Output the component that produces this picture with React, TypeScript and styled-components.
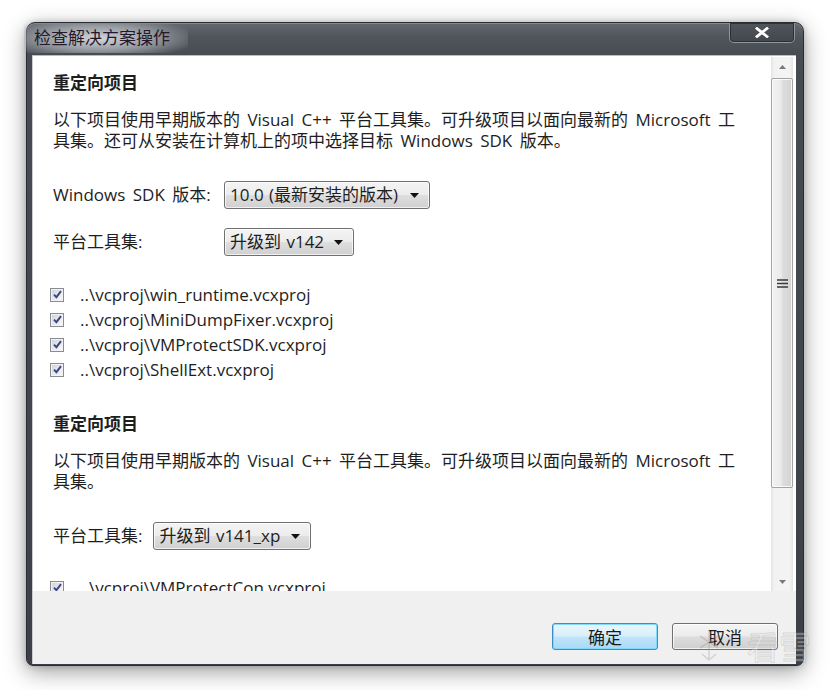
import React from 'react';
import styled, { createGlobalStyle } from 'styled-components';

const Global = createGlobalStyle`
  html, body { margin: 0; padding: 0; background: #ffffff; }
  body { font-family: "Open Sans", "Noto Sans CJK SC", sans-serif; color: #1e1e1e; }
`;

const Stage = styled.div`
  position: relative;
  width: 832px;
  height: 690px;
  box-sizing: border-box;
  padding: 22px 0 0 26px;
  overflow: hidden;
  background: #ffffff;
`;

const Window = styled.div`
  width: 778px;
  height: 644px;
  box-sizing: border-box;
  display: flex;
  flex-direction: column;
  padding: 0 7px 1px 5px;
  border: 1px solid #2a2d32;
  border-radius: 9px 9px 7px 7px;
  background: linear-gradient(180deg, #646970 0px, #50555c 14px, #474c53 32px, #3c4046 100%);
  box-shadow: 0 6px 22px rgba(0, 0, 0, 0.38), 0 0 6px rgba(0, 0, 0, 0.2),
    inset 0 1px 0 rgba(255, 255, 255, 0.22);
`;

const TitleBar = styled.div`
  height: 32px;
  display: flex;
  justify-content: space-between;
  align-items: flex-start;
`;

const Title = styled.div`
  margin: 1px 0 0 -8px;
  padding: 2px 18px 5px 10px;
  font-family: "Noto Sans CJK SC", sans-serif;
  font-size: 17px;
  line-height: 22px;
  color: #24182c;
  background: radial-gradient(ellipse 62% 75% at 45% 50%, rgba(218, 221, 226, 0.95) 0%, rgba(172, 177, 184, 0.7) 58%, rgba(120, 125, 132, 0) 100%);
`;

const CloseButton = styled.div`
  width: 66px;
  height: 20px;
  margin-right: 1px;
  box-sizing: border-box;
  display: flex;
  align-items: center;
  justify-content: center;
  border: 1px solid rgba(190, 196, 206, 0.6);
  border-top: none;
  border-radius: 0 0 5px 5px;
  background: linear-gradient(180deg, #50555c 0%, #43474e 100%);
  box-shadow: inset 0 0 0 1px rgba(20, 22, 26, 0.55);
`;

const Client = styled.div`
  flex: 1;
  display: flex;
  flex-direction: column;
  background: #f0f0f0;
  border-top: 1px solid #b9bcc0;
  border-left: 1px solid #c9ccd0;
`;

const ScrollArea = styled.div`
  height: 535px;
  display: flex;
  background: #ffffff;
`;

const Content = styled.div`
  flex: 1;
  overflow: hidden;
  padding: 15px 0 0 20px;
  font-size: 17px;
  word-spacing: 3px;
  color: #1e1e1e;
`;

const Heading = styled.div<{ $top?: number }>`
  margin-top: ${(p) => p.$top ?? 0}px;
  font-family: "Noto Sans CJK SC", sans-serif;
  font-weight: 700;
  font-size: 17px;
  line-height: 22px;
`;

const Para = styled.p`
  margin: 16px 0 0;
  width: 692px;
  line-height: 21px;
`;

const FormGrid = styled.div`
  margin-top: 30px;
  display: grid;
  grid-template-columns: 171px auto;
  row-gap: 19px;
  align-items: center;
  justify-items: start;
`;

const FormRow = styled.div`
  margin-top: 30px;
  display: flex;
  align-items: center;
  gap: 11px;
`;

const Label = styled.span`
  line-height: 22px;
`;

const Select = styled.div<{ $w: number }>`
  width: ${(p) => p.$w}px;
  height: 28px;
  box-sizing: border-box;
  display: flex;
  align-items: center;
  justify-content: space-between;
  padding: 0 10px 0 5px;
  border: 1px solid #707070;
  border-radius: 3px;
  background: linear-gradient(180deg, #f4f4f4 0%, #ececec 48%, #dedede 52%, #d0d0d0 100%);
  box-shadow: inset 0 0 0 1px rgba(255, 255, 255, 0.7);
  line-height: 22px;
  word-spacing: 1px;
  white-space: nowrap;
`;

const CheckList = styled.div<{ $top: number }>`
  margin: ${(p) => p.$top}px 0 0 -3px;
  display: flex;
  flex-direction: column;
`;

const CheckRow = styled.div`
  height: 25px;
  display: flex;
  align-items: center;
  gap: 16px;
  line-height: 22px;
  white-space: nowrap;
`;

const Box = styled.span`
  width: 14px;
  height: 14px;
  box-sizing: border-box;
  flex: none;
  display: flex;
  align-items: center;
  justify-content: center;
  border: 1px solid #8a8c94;
  background: linear-gradient(135deg, #cfd0d4 0%, #e6e7ea 50%, #fafafa 100%);
  box-shadow: inset 0 0 0 1px #f2f2f4;
`;

const ScrollBar = styled.div`
  width: 22px;
  margin: 1px 3px 0 0;
  display: flex;
  flex-direction: column;
  background: linear-gradient(90deg, #e4e4e4 0%, #f2f2f2 15%, #f4f4f4 85%, #e4e4e4 100%);
`;

const ScrollButton = styled.div`
  height: 19px;
  display: flex;
  align-items: center;
  justify-content: center;
`;

const Track = styled.div`
  flex: 1;
  display: flex;
  flex-direction: column;
`;

const Thumb = styled.div`
  margin-top: 2px;
  height: 410px;
  box-sizing: border-box;
  display: flex;
  align-items: center;
  justify-content: center;
  border: 1px solid #a3a3a3;
  border-radius: 2px;
  background: linear-gradient(90deg, #f2f2f2 0%, #ebebeb 45%, #dcdcdc 55%, #d4d4d4 100%);
  box-shadow: inset 0 0 0 1px rgba(255, 255, 255, 0.8);
`;

const Footer = styled.div`
  flex: 1;
  display: flex;
  justify-content: flex-end;
  align-items: flex-start;
  gap: 14px;
  padding: 32px 18px 0 0;
  background: #f0f0f0;
`;

const Button = styled.div<{ $primary?: boolean; $w: number }>`
  width: ${(p) => p.$w}px;
  height: 27px;
  box-sizing: border-box;
  display: flex;
  align-items: center;
  justify-content: center;
  font-family: "Noto Sans CJK SC", sans-serif;
  font-size: 17px;
  color: #1a1a1a;
  border-radius: 3px;
  border: 1px solid ${(p) => (p.$primary ? '#3c8dc0' : '#707070')};
  background: ${(p) =>
    p.$primary
      ? 'linear-gradient(180deg, #e9f6fd 0%, #d9effb 48%, #bfe5fa 52%, #a9d9f4 100%)'
      : 'linear-gradient(180deg, #f4f4f4 0%, #ececec 48%, #dddddd 52%, #cfcfcf 100%)'};
  box-shadow: ${(p) =>
    p.$primary ? 'inset 0 0 0 1px rgba(120, 215, 250, 0.9)' : 'inset 0 0 0 1px rgba(255, 255, 255, 0.7)'};
`;

const Watermark = styled.div`
  position: absolute;
  left: 697px;
  top: 624px;
  display: flex;
  align-items: center;
  gap: 26px;
  pointer-events: none;
`;

const WatermarkText = styled.span`
  font-family: "Noto Sans CJK SC", sans-serif;
  font-size: 32px;
  line-height: 42px;
  color: rgba(255, 255, 255, 0.3);
  -webkit-text-stroke: 1px rgba(150, 150, 150, 0.3);
`;

const Arrow = () => (
  <svg width="9" height="5" viewBox="0 0 9 5">
    <path d="M0 0h9L4.5 5z" fill="#111" />
  </svg>
);

const ScrollArrow = ({ up }: { up?: boolean }) => (
  <svg width="7" height="4" viewBox="0 0 7 4">
    <path d={up ? 'M0 4h7L3.5 0z' : 'M0 0h7L3.5 4z'} fill="#7a7a7a" />
  </svg>
);

const Check = () => (
  <svg width="9" height="9" viewBox="0 0 9 9">
    <path d="M1 4.6 L3.4 7.2 L8 1.2" stroke="#3b4584" strokeWidth="1.9" fill="none" />
  </svg>
);

const Snowflake = () => (
  <svg width="24" height="34" viewBox="0 0 24 34">
    <g stroke="rgba(150,150,150,0.32)" strokeWidth="1.6" fill="none">
      <path d="M12 2v30M3 8l18 12M21 8L3 20M5 26l7 6 7-6" />
    </g>
  </svg>
);

const projects1 = [
  '..\\vcproj\\win_runtime.vcxproj',
  '..\\vcproj\\MiniDumpFixer.vcxproj',
  '..\\vcproj\\VMProtectSDK.vcxproj',
  '..\\vcproj\\ShellExt.vcxproj',
];

const desc1 =
  '以下项目使用早期版本的 Visual C++ 平台工具集。可升级项目以面向最新的 Microsoft 工具集。还可从安装在计算机上的项中选择目标 Windows SDK 版本。';
const desc2 = '以下项目使用早期版本的 Visual C++ 平台工具集。可升级项目以面向最新的 Microsoft 工具集。';

export default function App() {
  return (
    <Stage>
      <Global />
      <Window>
        <TitleBar>
          <Title>检查解决方案操作</Title>
          <CloseButton>
            <svg width="14" height="11" viewBox="0 0 14 11">
              <path d="M2 1.5 L12 9.5 M12 1.5 L2 9.5" stroke="#ffffff" strokeWidth="2.8" strokeLinecap="square" />
            </svg>
          </CloseButton>
        </TitleBar>
        <Client>
          <ScrollArea>
            <Content>
              <Heading>重定向项目</Heading>
              <Para>{desc1}</Para>
              <FormGrid>
                <Label>Windows SDK 版本:</Label>
                <Select $w={206}>
                  <span>10.0 (最新安装的版本)</span>
                  <Arrow />
                </Select>
                <Label>平台工具集:</Label>
                <Select $w={130}>
                  <span>升级到 v142</span>
                  <Arrow />
                </Select>
              </FormGrid>
              <CheckList $top={26}>
                {projects1.map((p) => (
                  <CheckRow key={p}>
                    <Box>
                      <Check />
                    </Box>
                    <span>{p}</span>
                  </CheckRow>
                ))}
              </CheckList>
              <Heading $top={30}>重定向项目</Heading>
              <Para>{desc2}</Para>
              <FormRow>
                <Label>平台工具集:</Label>
                <Select $w={158}>
                  <span>升级到 v141_xp</span>
                  <Arrow />
                </Select>
              </FormRow>
              <CheckList $top={25}>
                <CheckRow>
                  <Box>
                    <Check />
                  </Box>
                  <span>..\vcproj\VMProtectCon.vcxproj</span>
                </CheckRow>
              </CheckList>
            </Content>
            <ScrollBar>
              <ScrollButton>
                <ScrollArrow up />
              </ScrollButton>
              <Track>
                <Thumb>
                  <svg width="11" height="9" viewBox="0 0 11 9">
                    <path d="M0 1h11M0 4.5h11M0 8h11" stroke="#3a3a3a" strokeWidth="1.4" />
                  </svg>
                </Thumb>
              </Track>
              <ScrollButton>
                <ScrollArrow />
              </ScrollButton>
            </ScrollBar>
          </ScrollArea>
          <Footer>
            <Button $primary $w={106}>确定</Button>
            <Button $w={106}>取消</Button>
          </Footer>
        </Client>
      </Window>
      <Watermark>
        <Snowflake />
        <WatermarkText>看雪</WatermarkText>
      </Watermark>
    </Stage>
  );
}
